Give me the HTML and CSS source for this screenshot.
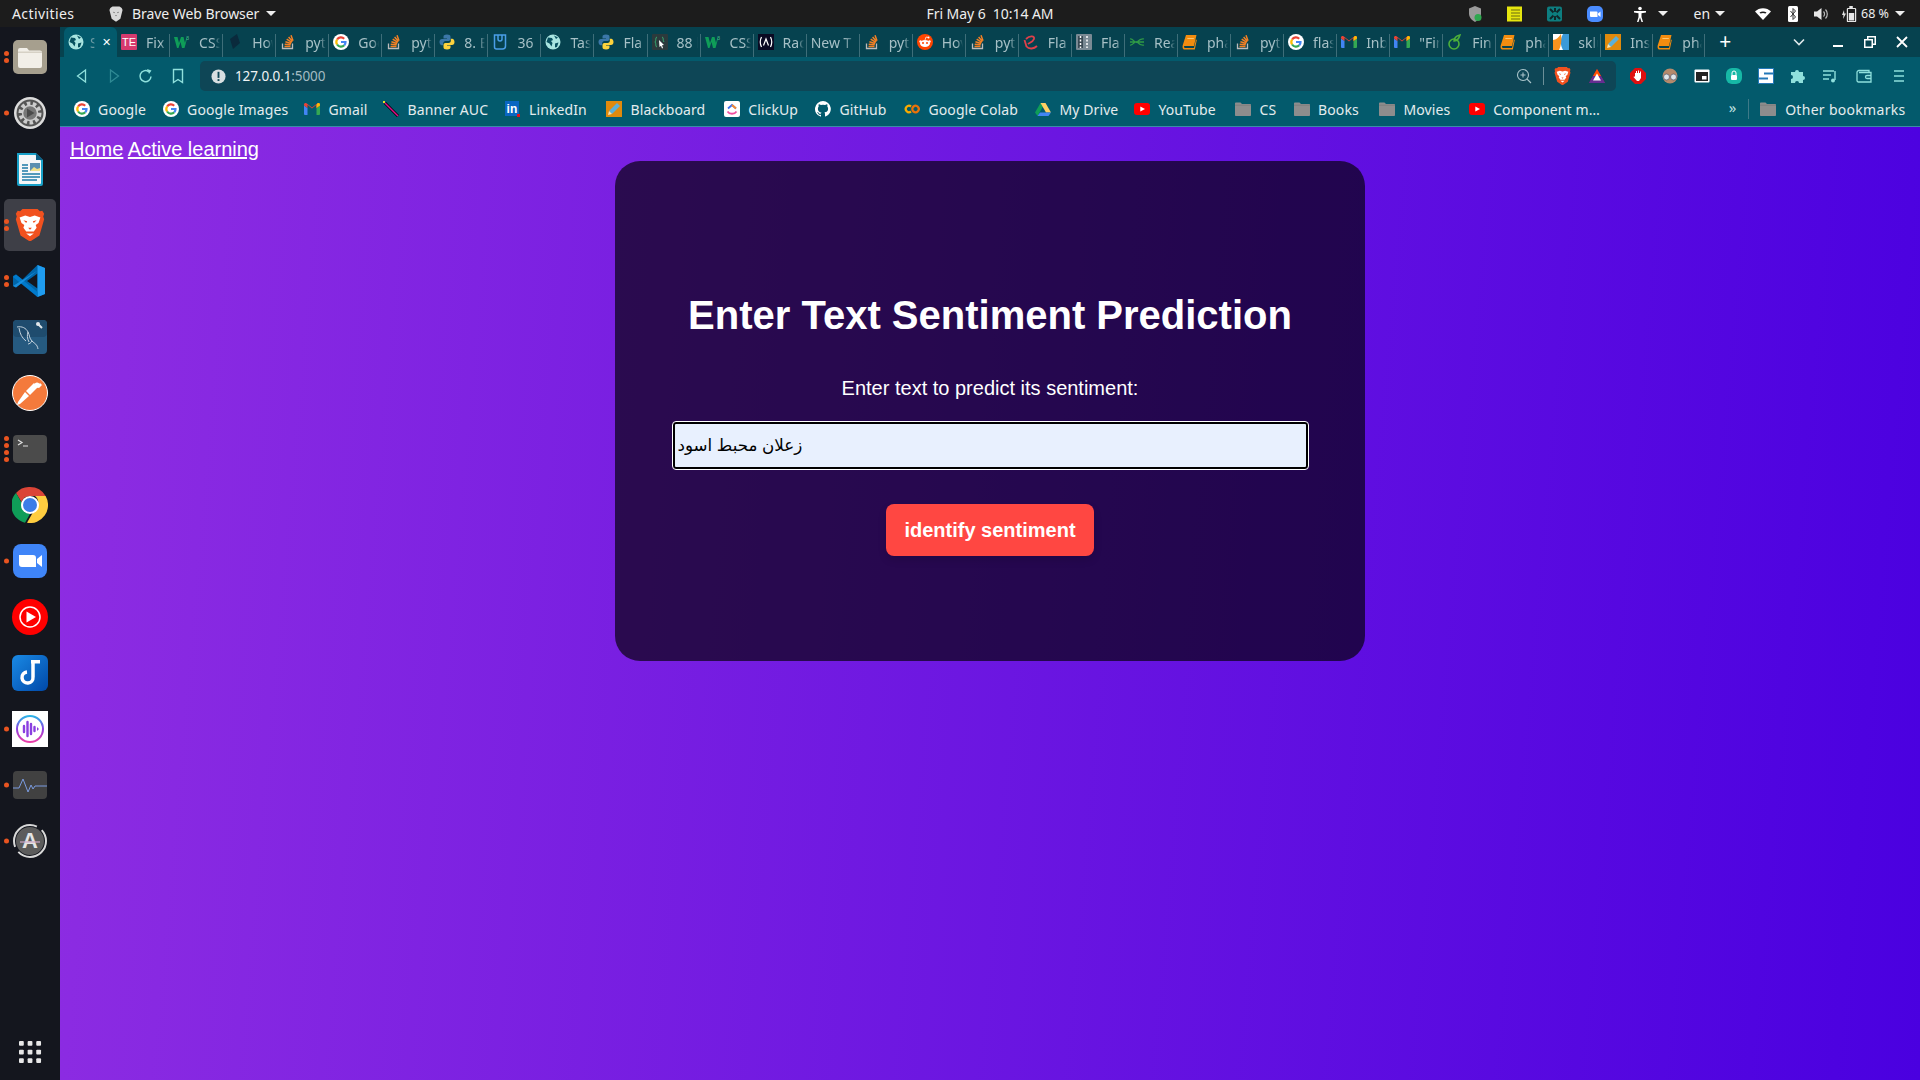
FILE: index.html
```html
<!DOCTYPE html>
<html lang="en">
<head>
<meta charset="utf-8">
<title>Enter Text Sentiment Prediction</title>
<link rel="stylesheet" href="styles.css">
</head>
<body>
<svg class="defs" aria-hidden="true">
  <symbol id="lion" viewBox="0 0 32 36"><path fill="#f1511f" d="M8 1h16l2.500 2.500L29 3l2 3-1 3 1 3-5 17-9 6-2 0-9-6L1 12l1-3-1-3 2-3 2.500.5z"/><path fill="#fff" d="M5 10l6-2 5 1.500L21 8l6 2-2 6-3 2 1 3-3 4h-8l-3-4 1-3-3-2z"/><path fill="#f1511f" d="M9 13l4 1-1 2zM23 13l-4 1 1 2zM14 21h4l-2 2z"/><path fill="#fff" d="M12 27h8l-4 3z"/></symbol>
  <symbol id="lionGray" viewBox="0 0 32 36"><path fill="#d9d9d9" d="M8 1h16l5 3 2 5-5 20-9 6h-2l-9-6L1 9l2-5z"/><path fill="#444" d="M9 13l4 1-1 2zM23 13l-4 1 1 2zM14 21h4l-2 2z"/></symbol>
  <symbol id="globe" viewBox="0 0 16 16"><circle cx="8" cy="8" r="7.500" fill="#a8e4e0"/><path fill="#07505f" d="M3 3.500l4 .500 1 2-2 1 1.500 2-1 3.500-2-3-3-1.500zM10 9.500l3.500-1L12 13l-2 .5zM9 1.500l4 2-2 1.500z"/></symbol>
  <symbol id="g" viewBox="0 0 16 16"><circle cx="8" cy="8" r="8" fill="#fff"/><g fill="none" stroke-width="2.200"><path stroke="#ea4335" d="M4.100 5.500A4.600 4.600 0 0 1 11.200 4.700"/><path stroke="#fbbc05" d="M4.100 10.500A4.600 4.600 0 0 1 4.100 5.500"/><path stroke="#34a853" d="M11.300 11.300A4.600 4.600 0 0 1 4.100 10.500"/><path stroke="#4285f4" d="M8 8h4.500A4.600 4.600 0 0 1 11.300 11.300"/></g></symbol>
  <symbol id="gmail" viewBox="0 0 16 16"><path fill="#4285f4" d="M0 4.500l3.500 2.500V14H1a1 1 0 0 1-1-1z"/><path fill="#34a853" d="M16 4.500L12.500 7v7H15a1 1 0 0 0 1-1z"/><path fill="#ea4335" d="M0 3.500C0 2 1.500 1.500 2.500 2.300L8 6.500l5.500-4.200C14.500 1.500 16 2 16 3.500v1L12.500 7V3.800L8 7.500 3.500 3.800V7L0 4.500z"/><path fill="#fbbc05" d="M12.500 4v3L16 4.500v-1C16 2 14.500 1.500 13.500 2.300z"/></symbol>
  <symbol id="so" viewBox="0 0 16 16"><path fill="none" stroke="#bcbbbb" stroke-width="1.300" d="M2.500 9.500v5h10v-5"/><path fill="none" stroke="#f48024" stroke-width="1.500" d="M4.500 12.500h6M4.700 10.200l6 .6M5.400 7.700l5.800 1.800M6.700 5.200l5.100 3.100M8.600 3l3.900 4.500M11 1.300l2 5.500"/></symbol>
  <symbol id="python" viewBox="0 0 16 16"><path fill="#3b77a8" d="M8 .5c-3 0-3.500 1-3.500 2.200V4.500H8V5H3C1.500 5 .5 6.200.5 8s1 3.200 2.300 3.200H4.200V9.300c0-1.300 1-2.300 2.300-2.300h3.200c1 0 1.800-.8 1.800-1.900V2.700C11.500 1.300 10.300.5 8 .5z"/><path fill="#fdd23c" d="M8 15.500c3 0 3.500-1 3.500-2.200v-1.800H8V11h5c1.500 0 2.500-1.200 2.500-3s-1-3.200-2.300-3.200h-1.400v1.900c0 1.300-1 2.300-2.300 2.300H6.300c-1 0-1.800.8-1.800 1.900v2.400c0 1.400 1.200 2.200 3.500 2.200z"/></symbol>
  <symbol id="book" viewBox="0 0 16 16"><path fill="#f28c0f" d="M4 1h10.500l-2.500 11H2.500C1.500 12 2 14 3 14h9l2-8.500.8.500L12.800 15.500H2.500C.5 15.500 .3 13 .8 11z"/><path fill="#ffc56a" d="M5.500 4h6.500l-.3 1H5.200z"/></symbol>
  <symbol id="w3" viewBox="0 0 16 16"><path fill="#0f9d58" d="M0 3h3.500l1.500 6 2-6h2.500l1.500 6 1.500-6h1L10.500 14H8L6.500 8 4.500 14H3z"/><text x="12" y="5.500" font-size="5.500" fill="#4db38a" font-family="Liberation Sans">3</text></symbol>
  <symbol id="folder" viewBox="0 0 16 16"><path fill="#8d8d8d" d="M0 2.500C0 2 .4 1.500 1 1.500h4.500l1.500 1.500h8c.6 0 1 .4 1 1v10c0 .6-.4 1-1 1H1c-.6 0-1-.4-1-1z"/><path fill="#777" d="M0 4.500h16V3.800H0z"/></symbol>
  <symbol id="yt" viewBox="0 0 16 16"><rect y="2" width="16" height="12" rx="3" fill="#f00"/><path fill="#fff" d="M6.300 5.500L11 8l-4.700 2.500z"/></symbol>
  <symbol id="pencil" viewBox="0 0 16 16"><rect width="16" height="16" fill="#e08a0c"/><path fill="#5bb0d8" d="M11 2l3 3-8 8-3-3z"/><path fill="#f7e4b5" d="M3 10l3 3-4 1z"/></symbol>
  <symbol id="reddit" viewBox="0 0 16 16"><circle cx="8" cy="8" r="8" fill="#ff4500"/><ellipse cx="8" cy="9.500" rx="5" ry="3.500" fill="#fff"/><circle cx="3.500" cy="7.500" r="1.200" fill="#fff"/><circle cx="12.500" cy="7.500" r="1.200" fill="#fff"/><circle cx="11.500" cy="3.500" r="1" fill="#fff"/><path stroke="#fff" fill="none" stroke-width=".7" d="M8 6l1-3 2.500.5"/><circle cx="6" cy="9" r="1" fill="#ff4500"/><circle cx="10" cy="9" r="1" fill="#ff4500"/></symbol>
</svg>

<div class="screen">
  <header class="topbar">
    <div class="top-left">
      <span class="activities">Activities</span>
      <svg class="top-lion"><use href="#lionGray"/></svg>
      <span>Brave Web Browser</span>
      <span class="caret"></span>
    </div>
    <div class="clock">Fri May 6&nbsp; 10:14 AM</div>
    <div class="tray">
      <svg class="tray-ic" viewBox="0 0 16 16"><path fill="#9a9a9a" d="M8 0l6 2.500v5C14 11.500 11 14.500 8 16c-3-1.500-6-4.500-6-8.500v-5z"/><circle cx="11" cy="11.500" r="3.500" fill="#2ea84f"/></svg>
      <svg class="tray-ic" viewBox="0 0 16 16"><rect width="15" height="15" y=".5" fill="#e6e60f"/><path stroke="#6a6a10" stroke-width="1.200" d="M4 4h9M4 7h9M4 10h9M4 13h9"/></svg>
      <svg class="tray-ic" viewBox="0 0 16 16"><rect width="15" height="15" y=".5" rx="2" fill="#0d7e80"/><path stroke="#10262a" stroke-width="2" d="M3 3l10 10M13 3L3 13M8 2v12"/><circle cx="8" cy="8" r="2.200" fill="#0d7e80"/></svg>
      <svg class="tray-ic" viewBox="0 0 16 16"><rect width="16" height="16" rx="5" fill="#4a8cff"/><path fill="#fff" d="M3 5.500h6.500a1 1 0 0 1 1 1V11H4a1 1 0 0 1-1-1zM11 7.500l2.500-2v5.500L11 9z"/></svg>
      <svg class="tray-ic" viewBox="0 0 16 16"><circle cx="8" cy="2.500" r="1.800" fill="#fff"/><path fill="#fff" d="M2 5h12v1.500l-4.500.7V11l1.500 5H9.500L8 11.500 6.500 16H5l1.500-5V7.200L2 6.500z"/></svg>
      <span class="caret"></span>
      <span class="tray-en">en</span>
      <span class="caret"></span>
      <svg class="tray-ic" viewBox="0 0 16 16"><path fill="#fff" d="M0 5.500C4 1 12 1 16 5.500L8 14z"/><path fill="#1c1c1c" d="M4.500 6.500c2-1.300 5-1.300 7 0l-1 1c-1.500-.8-3.500-.8-5 0z"/></svg>
      <svg class="tray-ic" viewBox="0 0 16 16"><rect x="3" width="10" height="16" rx="1.500" fill="#fff"/><path fill="none" stroke="#333" stroke-width="1" d="M5.500 5l5 6L8 13.500v-11L10.500 5l-5 6"/></svg>
      <svg class="tray-ic" viewBox="0 0 16 16"><path fill="#e6e6e6" d="M1 5.500h3L8.500 2v12L4 10.500H1z"/><path fill="none" stroke="#bbb" stroke-width="1.200" d="M10.500 5.500a3.500 3.500 0 0 1 0 5M12.500 3.500a6.500 6.500 0 0 1 0 9"/></svg>
      <svg class="tray-ic" viewBox="0 0 16 16"><path fill="none" stroke="#e6e6e6" stroke-width="1.200" d="M7 2.500h7a.6.6 0 0 1 .6.6v12a.6.6 0 0 1-.6.6H7a.6.6 0 0 1-.6-.6v-12a.6.6 0 0 1 .6-.6z"/><rect x="8.300" y="0" width="3.500" height="2" fill="#e6e6e6"/><rect x="7.800" y="7" width="5.400" height="7.500" fill="#e6e6e6"/><path fill="#e6e6e6" d="M3 4L1 9h1.500L2 13l3-5.500H3.300z"/></svg>
      <span class="tray-bat">68 %</span>
      <span class="caret"></span>
    </div>
  </header>

  <div class="desktop">
    <nav class="dock">
      <div class="dock-item"><div class="dots"><i></i><i></i></div>
        <svg class="dock-ic" viewBox="0 0 34 34"><rect width="34" height="34" rx="5" fill="#a69f8e"/><path fill="#f2efe8" d="M5 10a2 2 0 0 1 2-2h7l2 2.500h11a2 2 0 0 1 2 2V26a2 2 0 0 1-2 2H7a2 2 0 0 1-2-2z"/><path fill="#d6d1c5" d="M5 11.500h24v1.500H5z"/></svg></div>
      <div class="dock-item"><div class="dots"><i></i></div>
        <svg class="dock-ic" viewBox="0 0 34 34"><circle cx="17" cy="17" r="16" fill="#dcdcdc"/><circle cx="17" cy="17" r="13.500" fill="#555"/><circle cx="17" cy="17" r="9" fill="none" stroke="#ccc" stroke-width="5" stroke-dasharray="3.300 2.300"/><circle cx="17" cy="17" r="7.500" fill="#777" stroke="#ccc" stroke-width="1.500"/><path fill="#4a4a4a" d="M14 12.500l7.500 4.500-7.500 4.500z"/></svg></div>
      <div class="dock-item">
        <svg class="dock-ic" viewBox="0 0 34 34"><path fill="#18a0c8" d="M4 1h19l7 7v24a2 2 0 0 1-2 2H6a2 2 0 0 1-2-2z"/><path fill="#f5f7f8" d="M6 3h16.500L28 8.500V31a1 1 0 0 1-1 1H7a1 1 0 0 1-1-1z"/><path fill="#0e5f84" d="M23 1l7 7h-7z"/><rect x="17" y="11" width="10" height="8" fill="#5b8fb0"/><path fill="#efe08a" d="M17 19l4-4 3 2 3-1v3z"/><path stroke="#1c7ba6" stroke-width="1.500" d="M9 13h6M9 16h6M9 19h6M9 22h18M9 25h18M9 28h15"/></svg></div>
      <div class="dock-item dock-active"><div class="dots"><i></i><i></i></div>
        <svg class="dock-ic" viewBox="0 0 32 36"><use href="#lion"/></svg></div>
      <div class="dock-item"><div class="dots"><i></i><i></i></div>
        <svg class="dock-ic" viewBox="0 0 34 34"><path fill="#0065a9" d="M24.500 1L9.500 15.500 3 10.500 0 12v10l3 1.500 6.500-5L24.500 33 32 30V4zM24.500 9.500V24.500L14 17z"/><path fill="#1f9cf0" d="M24.500 1L32 4v26l-7.500 3z"/><path fill="#007acc" d="M3 10.500L24.500 28v5L0 13z"/><path fill="#1f9cf0" d="M24.500 1v5.500L0 22l3 1.500L24.500 6.500z" opacity=".7"/></svg></div>
      <div class="dock-item">
        <svg class="dock-ic" viewBox="0 0 34 34"><rect width="34" height="34" rx="4" fill="#265a80"/><rect width="34" height="17" rx="4" fill="#1f4c6e"/><path fill="none" stroke="#d5e0e8" stroke-width=".9" d="M4 7c5-1 9 1 11 5s1 6 4 9 5 3 6 8M15 12c-1 3-1 6 1 10M6 8c1 6 3 10 7 13M19 21c-1 2-3 3-4 3"/><path stroke="#dfe6ea" stroke-width="2" d="M25 4l4 4"/><circle cx="25" cy="4" r="2" fill="#dfe6ea"/></svg></div>
      <div class="dock-item">
        <svg class="dock-ic dock-big" viewBox="0 0 36 36"><circle cx="18" cy="18" r="17.500" fill="#f47a3c" stroke="#fff" stroke-width="1"/><path fill="#fff" d="M28 8l2 2-3 3-3-1zM26 12l-8 8-4-4 8-8zM13 17l4 4-9 8-3 1 1-3z"/><circle cx="25" cy="10" r="2.500" fill="#fff"/></svg></div>
      <div class="dock-item"><div class="dots"><i></i><i></i><i></i><i></i></div>
        <svg class="dock-ic dock-term" viewBox="0 0 34 28"><rect width="34" height="28" rx="4" fill="#4b4b4b"/><path fill="none" stroke="#e0e0e0" stroke-width="1.200" d="M5 5l4 2.500L5 10M10 11h5"/></svg></div>
      <div class="dock-item">
        <svg class="dock-ic dock-big" viewBox="0 0 36 36"><path fill="#db4437" d="M18 0a18 18 0 0 1 15.600 9H18a9 9 0 0 0-8.500 6L4 6a18 18 0 0 1 14-6z"/><path fill="#0f9d58" d="M4 6l7.800 13.500A7 7 0 0 0 18 27l-5 8.700A18 18 0 0 1 4 6z"/><path fill="#ffcd40" d="M33.600 9A18 18 0 0 1 15 35.800L24 20a7 7 0 0 0-1-11z"/><circle cx="18" cy="18" r="9" fill="#fff"/><circle cx="18" cy="18" r="7" fill="#3b7de8"/></svg></div>
      <div class="dock-item"><div class="dots"><i></i></div>
        <svg class="dock-ic" viewBox="0 0 34 34"><rect width="34" height="34" rx="8" fill="#3f85f8"/><path fill="#fff" d="M6 11h14a3 3 0 0 1 3 3v9H9a3 3 0 0 1-3-3zM24 15l5-4v12l-5-4z"/></svg></div>
      <div class="dock-item">
        <svg class="dock-ic dock-big" viewBox="0 0 36 36"><circle cx="18" cy="18" r="18" fill="#f00"/><circle cx="18" cy="18" r="10" fill="none" stroke="#fff" stroke-width="1.500"/><path fill="#fff" d="M14.500 12.500L24 18l-9.500 5.500z"/></svg></div>
      <div class="dock-item">
        <svg class="dock-ic dock-big" viewBox="0 0 36 36"><defs><linearGradient id="jop" x1="0" y1="0" x2="1" y2="1"><stop offset="0" stop-color="#1a8ae5"/><stop offset="1" stop-color="#0048a8"/></linearGradient></defs><rect width="36" height="36" rx="6" fill="url(#jop)"/><path fill="none" stroke="#fff" stroke-width="3.500" d="M21 7v15a5.500 5.500 0 1 1-6-5"/><path fill="#fff" d="M19 5h9v3.500h-9z"/></svg></div>
      <div class="dock-item"><div class="dots"><i></i></div>
        <svg class="dock-ic dock-big" viewBox="0 0 36 36"><defs><linearGradient id="ang" x1="0" y1="0" x2="0" y2="1"><stop offset="0" stop-color="#2bb5e8"/><stop offset=".5" stop-color="#8a3fe0"/><stop offset="1" stop-color="#ea3fa8"/></linearGradient></defs><rect width="36" height="36" fill="#fff"/><circle cx="18" cy="18" r="13" fill="none" stroke="url(#ang)" stroke-width="2"/><path stroke="#8a3fe0" stroke-width="2.400" stroke-linecap="round" d="M12 15v6M15.500 11v14M19 13v10M22.500 16v4"/><path fill="#8a3fe0" d="M25 16l2 2-2 2z"/></svg></div>
      <div class="dock-item"><div class="dots"><i></i></div>
        <svg class="dock-ic dock-term" viewBox="0 0 34 28"><rect width="34" height="28" rx="4" fill="#414141"/><path fill="none" stroke="#7a9be0" stroke-width="1" d="M0 17h6l4-9 5 13 3-7 2 4 2-3h12"/></svg></div>
      <div class="dock-item"><div class="dots"><i></i></div>
        <svg class="dock-ic" viewBox="0 0 34 34"><circle cx="17" cy="17" r="16" fill="none" stroke="#d8d8d8" stroke-width="2" stroke-dasharray="38 6"/><circle cx="17" cy="17" r="14" fill="#5c5c5c"/><text class="updater-a" x="17" y="24" text-anchor="middle">A</text><path stroke="#cfa8c8" stroke-width="1.200" d="M7 18h20"/></svg></div>
      <div class="dock-item dock-apps">
        <svg class="apps-ic" viewBox="0 0 24 24"><g fill="#e8e8e8"><rect x="0" y="0" width="5" height="5" rx="1"/><rect x="9" y="0" width="5" height="5" rx="1"/><rect x="18" y="0" width="5" height="5" rx="1"/><rect x="0" y="9" width="5" height="5" rx="1"/><rect x="9" y="9" width="5" height="5" rx="1"/><rect x="18" y="9" width="5" height="5" rx="1"/><rect x="0" y="18" width="5" height="5" rx="1"/><rect x="9" y="18" width="5" height="5" rx="1"/><rect x="18" y="18" width="5" height="5" rx="1"/></g></svg></div>
    </nav>

    <div class="browser">
      <div class="tabstrip">
        <div class="tab tab-active"><svg class="fav"><use href="#globe"/></svg><span class="tab-label">S</span><span class="tab-x">✕</span></div>
        <div class="tab"><svg class="fav" viewBox="0 0 16 16"><rect width="16" height="16" rx="1" fill="#d63a6e"/><text class="fav-te" x="8" y="12" text-anchor="middle">TE</text></svg><span class="tab-label">Fix</span></div>
        <div class="tab"><svg class="fav"><use href="#w3"/></svg><span class="tab-label">CSS</span></div>
        <div class="tab"><svg class="fav" viewBox="0 0 16 16"><path fill="#0a2a3c" d="M3 5l7-5 3 9-7 6z"/></svg><span class="tab-label">How</span></div>
        <div class="tab"><svg class="fav"><use href="#so"/></svg><span class="tab-label">pyt</span></div>
        <div class="tab"><svg class="fav"><use href="#g"/></svg><span class="tab-label">Goo</span></div>
        <div class="tab"><svg class="fav"><use href="#so"/></svg><span class="tab-label">pyt</span></div>
        <div class="tab"><svg class="fav"><use href="#python"/></svg><span class="tab-label">8. E</span></div>
        <div class="tab"><svg class="fav" viewBox="0 0 16 16"><path fill="none" stroke="#4a9ee8" stroke-width="1.500" d="M2.500 1h11v11a3 3 0 0 1-3 3h-6a2 2 0 0 1-2-2z"/><path fill="none" stroke="#4a9ee8" stroke-width="1.500" d="M6 1v4a2 2 0 0 0 4 0V1"/></svg><span class="tab-label">36 l</span></div>
        <div class="tab"><svg class="fav"><use href="#globe"/></svg><span class="tab-label">Tas</span></div>
        <div class="tab"><svg class="fav"><use href="#python"/></svg><span class="tab-label">Fla</span></div>
        <div class="tab"><svg class="fav" viewBox="0 0 16 16"><rect width="16" height="16" rx="1" fill="#2c3a3c"/><path fill="none" stroke="#35a870" d="M5 3C3 3 4.500 7 3 8c1.500 1 0 5 2 5M10 3c2 0 .5 4 2 5"/><path fill="#fff" d="M7 6l5 5-2 .3 1 2.700-1 .4-1-2.700L7.500 13z"/></svg><span class="tab-label">88 l</span></div>
        <div class="tab"><svg class="fav"><use href="#w3"/></svg><span class="tab-label">CSS</span></div>
        <div class="tab"><svg class="fav" viewBox="0 0 16 16"><rect width="16" height="16" fill="#0a0a23"/><path fill="none" stroke="#fff" stroke-width="1.200" d="M3.500 3C2 6 2 10 3.500 13M12.500 3c1.500 3 1.500 7 0 10M5.500 11.500L8 5l2.500 6.500"/></svg><span class="tab-label">Rac</span></div>
        <div class="tab tab-nofav"><span class="tab-label">New T</span></div>
        <div class="tab"><svg class="fav"><use href="#so"/></svg><span class="tab-label">pyt</span></div>
        <div class="tab"><svg class="fav"><use href="#reddit"/></svg><span class="tab-label">Hov</span></div>
        <div class="tab"><svg class="fav"><use href="#so"/></svg><span class="tab-label">pyt</span></div>
        <div class="tab"><svg class="fav" viewBox="0 0 16 16"><path fill="none" stroke="#e0404a" stroke-width="1.800" d="M1.500 6l2 6.500C6 15.500 11 15 14 12M3 5c4-4 9-3 8 0s-5 4-6 5"/></svg><span class="tab-label">Fla</span></div>
        <div class="tab"><svg class="fav" viewBox="0 0 16 16"><rect width="16" height="16" rx="1" fill="#7a8a94"/><rect x="2" y="2" width="5" height="12" fill="#3a4a54"/><path stroke="#fff" stroke-width="1.500" stroke-dasharray="2 1.500" d="M11 2v12M4.500 2v12"/></svg><span class="tab-label">Fla</span></div>
        <div class="tab"><svg class="fav" viewBox="0 0 16 16"><path fill="none" stroke="#2f9a46" stroke-width="1.300" d="M1 5c3-1 5 5 7 3s4-4 7-3M1 11c3 1 5-5 7-3s4 4 7 3M1 8h14"/></svg><span class="tab-label">Rea</span></div>
        <div class="tab"><svg class="fav"><use href="#book"/></svg><span class="tab-label">pha</span></div>
        <div class="tab"><svg class="fav"><use href="#so"/></svg><span class="tab-label">pyt</span></div>
        <div class="tab"><svg class="fav"><use href="#g"/></svg><span class="tab-label">flas</span></div>
        <div class="tab"><svg class="fav"><use href="#gmail"/></svg><span class="tab-label">Inb</span></div>
        <div class="tab"><svg class="fav"><use href="#gmail"/></svg><span class="tab-label">"Fin</span></div>
        <div class="tab"><svg class="fav" viewBox="0 0 16 16"><circle cx="7" cy="10" r="5" fill="none" stroke="#4caf3a" stroke-width="1.600"/><path fill="none" stroke="#4caf3a" stroke-width="1.500" d="M7 7c0-3 2-5 6-6-1 3-2 6-6 6z"/></svg><span class="tab-label">Fin</span></div>
        <div class="tab"><svg class="fav"><use href="#book"/></svg><span class="tab-label">pha</span></div>
        <div class="tab"><svg class="fav" viewBox="0 0 16 16"><rect width="16" height="16" fill="#fff"/><path fill="#3a9ad9" d="M10 0h6v16h-6c-3-5-3-11 0-16z"/><path fill="#f7931e" d="M0 6c3 0 6-3 8-6 1 6 0 12-2 16H0z"/></svg><span class="tab-label">sklu</span></div>
        <div class="tab"><svg class="fav"><use href="#pencil"/></svg><span class="tab-label">Ins</span></div>
        <div class="tab"><svg class="fav"><use href="#book"/></svg><span class="tab-label">pha</span></div>
        <div class="new-tab">+</div>
        <div class="win-ctrls">
          <svg class="win-ic" viewBox="0 0 12 12"><path fill="none" stroke="#dfe8ea" stroke-width="1.600" d="M1 3.500l5 5 5-5"/></svg>
          <svg class="win-ic" viewBox="0 0 12 12"><path stroke="#fff" stroke-width="2" d="M1 10h10"/></svg>
          <svg class="win-ic" viewBox="0 0 12 12"><path fill="#fff" d="M3 0h9v9H9v3H0V3h3zM4.500 1.500V3H9v4.500h1.500v-6zM1.500 4.500v6h6v-6z"/></svg>
          <svg class="win-ic" viewBox="0 0 12 12"><path stroke="#fff" stroke-width="1.800" d="M1 1l10 10M11 1L1 11"/></svg>
        </div>
      </div>

      <div class="toolbar">
        <div class="nav-btns">
          <svg class="tb-ic" viewBox="0 0 16 16"><path fill="none" stroke="#8fe0dc" stroke-width="1.300" d="M11.500 2v12L3.500 8z"/></svg>
          <svg class="tb-ic" viewBox="0 0 16 16"><path fill="none" stroke="#2f8a94" stroke-width="1.300" d="M4.500 2v12l8-6z"/></svg>
          <svg class="tb-ic" viewBox="0 0 16 16"><path fill="none" stroke="#8fe0dc" stroke-width="1.500" d="M13 8.500A5.500 5.500 0 1 1 10.500 3.500"/><path fill="#8fe0dc" d="M9 1l4.500 1.500L11 6z"/></svg>
          <svg class="tb-ic" viewBox="0 0 16 16"><path fill="none" stroke="#8fe0dc" stroke-width="1.400" d="M3.500 1.500h9v13L8 11.500l-4.500 3z"/></svg>
        </div>
        <div class="urlbar">
          <svg class="url-info" viewBox="0 0 16 16"><circle cx="8" cy="8" r="7.500" fill="#d8dfe1"/><rect x="7" y="3" width="2" height="6.500" fill="#0e4656"/><rect x="7" y="10.800" width="2" height="2" fill="#0e4656"/></svg>
          <span class="url-text">127.0.0.1<span class="url-dim">:5000</span></span>
          <div class="url-right">
            <svg class="tb-ic" viewBox="0 0 16 16"><circle cx="7" cy="7" r="5.500" fill="none" stroke="#a9c4ca" stroke-width="1.100"/><path stroke="#a9c4ca" stroke-width="1.100" d="M11 11l4 4M4.500 7h5M7 4.500v5"/></svg>
            <span class="url-sep"></span>
            <svg class="url-lion" viewBox="0 0 32 36"><use href="#lion"/></svg>
            <svg class="tb-ic url-bat" viewBox="0 0 16 16"><path fill="#9e1f63" d="M8 1l8 14H0z"/><path fill="#ff5000" d="M8 1l4 7H4z"/><path fill="#662d91" d="M4 8h8l4 7H0z"/><path fill="#fff" d="M8 5.500L12 12.500H4z"/></svg>
          </div>
        </div>
        <div class="ext-btns">
          <svg class="tb-ic" viewBox="0 0 16 16"><path fill="#e00f0f" d="M5 0h6l5 5v6l-5 5H5l-5-5V5z"/><path fill="#fff" d="M5 5h1V3h1v2h1V2.500h1V5h1V3.500h1V10l-2 3H7L3.500 9l.8-.8L5 9z"/></svg>
          <svg class="tb-ic" viewBox="0 0 16 16"><circle cx="8" cy="8" r="7.500" fill="#b58a6c"/><circle cx="4.500" cy="9" r="3" fill="#dfe6ea" stroke="#556" stroke-width=".7"/><circle cx="11.500" cy="9" r="3" fill="#dfe6ea" stroke="#556" stroke-width=".7"/></svg>
          <svg class="tb-ic" viewBox="0 0 16 16"><rect x=".5" y="1.500" width="15" height="13" rx="1" fill="#fff"/><rect x="2" y="4" width="12" height="9" fill="#222"/><rect x="8" y="8" width="4.500" height="3.500" fill="#fff"/></svg>
          <svg class="tb-ic" viewBox="0 0 16 16"><rect width="16" height="16" rx="6" fill="#17b8a6"/><path fill="none" stroke="#fff" d="M6 7V5a2 2 0 0 1 4 0v2"/><rect x="5" y="7" width="6" height="5" rx="1" fill="#fff"/></svg>
          <svg class="tb-ic" viewBox="0 0 16 16"><rect width="16" height="16" fill="#2478b8"/><path fill="#fff" d="M1 1h14v3.500H6v2h9V15H1v-3.500h9v-2H1z"/></svg>
          <svg class="tb-ic" viewBox="0 0 16 16"><path fill="#8fe0dc" d="M1 4h4a2 2 0 1 1 4 0h4v4a2 2 0 1 1 0 4v3H9a2 2 0 1 0-4 0H1v-4a2 2 0 1 0 0-4z"/></svg>
          <svg class="tb-ic" viewBox="0 0 16 16"><path stroke="#8fe0dc" stroke-width="1.400" fill="none" d="M1 3h11M1 7h8M1 11h6M13 3v9"/><circle cx="11" cy="12.500" r="2" fill="#8fe0dc"/></svg>
          <svg class="tb-ic ext-wallet" viewBox="0 0 16 16"><path fill="none" stroke="#8fe0dc" stroke-width="1.300" d="M1 4.500a2 2 0 0 1 2-2h10v2M1 4.500v8a1.500 1.500 0 0 0 1.500 1.500H15V4.500H3M15 7.500h-4a1.500 1.500 0 0 0 0 3h4"/></svg>
          <svg class="tb-ic ext-menu" viewBox="0 0 16 16"><path stroke="#8fe0dc" stroke-width="1.500" d="M3 3h10M3 8h10M3 13h10"/></svg>
        </div>
      </div>

      <div class="bookmarks">
        <div class="bm"><svg class="fav"><use href="#g"/></svg><span>Google</span></div>
        <div class="bm"><svg class="fav"><use href="#g"/></svg><span>Google Images</span></div>
        <div class="bm"><svg class="fav"><use href="#gmail"/></svg><span>Gmail</span></div>
        <div class="bm"><svg class="fav" viewBox="0 0 16 16"><path stroke="#000" stroke-width="3" d="M2 2l13 13"/><path stroke="#e0108a" stroke-width="1.500" d="M2 2l13 13"/><rect width="2" height="2" fill="#e8e020"/></svg><span>Banner AUC</span></div>
        <div class="bm"><svg class="fav" viewBox="0 0 16 16"><rect width="14" height="15" fill="#0a66c2"/><text class="fav-in" x="7" y="12" text-anchor="middle">in</text><rect x="12" y="13" width="3" height="3" fill="#e0101a"/></svg><span>LinkedIn</span></div>
        <div class="bm"><svg class="fav"><use href="#pencil"/></svg><span>Blackboard</span></div>
        <div class="bm"><svg class="fav" viewBox="0 0 16 16"><rect width="16" height="16" rx="2" fill="#fff"/><path fill="none" stroke="#f24fa0" stroke-width="1.800" d="M3.500 10.500c2 3 7 3 9 0"/><path fill="none" stroke="#3a6ff0" stroke-width="1.800" d="M4 7.500L8 4l4 3.500"/><path stroke="#fa8a2a" stroke-width="1.800" d="M8 4l4 3.500"/></svg><span>ClickUp</span></div>
        <div class="bm"><svg class="fav" viewBox="0 0 16 16"><path fill="#fff" d="M8 0a8 8 0 0 0-2.500 15.600c.4.100.5-.2.500-.4v-1.400c-2.200.5-2.700-1-2.700-1-.4-.9-.9-1.200-.9-1.200-.7-.5.100-.5.100-.5.800.100 1.200.8 1.200.8.700 1.200 1.900.9 2.300.7.100-.5.300-.9.500-1.100-1.800-.2-3.600-.9-3.600-4 0-.9.300-1.600.8-2.100-.1-.2-.4-1 .1-2.100 0 0 .7-.2 2.200.8a7.600 7.600 0 0 1 4 0c1.500-1 2.200-.8 2.200-.8.400 1.100.2 1.900.1 2.100.5.600.8 1.300.8 2.100 0 3.100-1.900 3.700-3.700 3.900.3.300.6.800.6 1.500v2.200c0 .2.100.5.600.4A8 8 0 0 0 8 0z"/></svg><span>GitHub</span></div>
        <div class="bm"><svg class="fav" viewBox="0 0 16 16"><g fill="none" stroke-width="2.300"><path stroke="#f9ab00" d="M7 5.500a3.200 3.200 0 1 0 0 5"/><path stroke="#e8710a" d="M9.500 5.500a3.200 3.200 0 1 1 0 5 3.200 3.200 0 0 1 0-5z"/></g></svg><span>Google Colab</span></div>
        <div class="bm"><svg class="fav" viewBox="0 0 16 16"><path fill="#0f9d58" d="M5.500 2L0 11.500 2.500 15 8 5.500z"/><path fill="#ffcf63" d="M5.500 2h5L16 11.500h-5z"/><path fill="#4285f4" d="M2.500 15h11L16 11.500H5z"/></svg><span>My Drive</span></div>
        <div class="bm"><svg class="fav"><use href="#yt"/></svg><span>YouTube</span></div>
        <div class="bm"><svg class="fav"><use href="#folder"/></svg><span>CS</span></div>
        <div class="bm"><svg class="fav"><use href="#folder"/></svg><span>Books</span></div>
        <div class="bm"><svg class="fav"><use href="#folder"/></svg><span>Movies</span></div>
        <div class="bm"><svg class="fav"><use href="#yt"/></svg><span>Component m…</span></div>
        <div class="bm-more">»</div>
        <div class="bm bm-other"><svg class="fav"><use href="#folder"/></svg><span>Other bookmarks</span></div>
      </div>

      <main class="page">
        <div class="page-nav"><a href="#">Home</a> <a href="#">Active learning</a></div>
        <section class="card">
          <h1>Enter Text Sentiment Prediction</h1>
          <label class="prompt" for="sentence">Enter text to predict its sentiment:</label>
          <input id="sentence" class="text-input" type="text" value="زعلان محبط اسود">
          <button class="submit" type="button">identify sentiment</button>
        </section>
      </main>
    </div>
  </div>
</div>
</body>
</html>
```
FILE: styles.css
```css
* { box-sizing: border-box; }
html, body { margin: 0; height: 100%; }
body { font-family: "Noto Sans", sans-serif; overflow: hidden; background: #14161e; }
.defs { position: absolute; width: 0; height: 0; }
.screen { display: flex; flex-direction: column; width: 1920px; height: 1080px; }

/* top bar */
.topbar { flex: 0 0 27px; display: flex; align-items: center; background: #1c1c1c; color: #eee; font-size: 14px; letter-spacing: -.05px; }
.top-left { flex: 0 0 925px; display: flex; align-items: center; padding-left: 12px; }
.activities { width: 97px; font-size: 14px; letter-spacing: .4px; white-space: nowrap; }
.top-lion { width: 14px; height: 16px; margin-right: 9px; }
.caret { width: 0; height: 0; border: 5px solid transparent; border-top: 5px solid #eee; border-bottom: 0; margin-left: 7px; }
.clock { flex: 0 0 130px; white-space: nowrap; text-align: center; font-size: 14px; }
.tray { margin-left: auto; display: flex; align-items: center; padding-right: 15px; }
.tray-ic { width: 16px; height: 16px; margin-left: 24px; }
.tray-en { font-size: 14px; margin-left: 26px; }
.tray-bat { font-size: 12.500px; letter-spacing: 0; margin-left: 4px; white-space: nowrap; }
.tray-bat + .caret { margin-left: 6px; }
.tray > .tray-ic:nth-child(5) { margin-left: 29px; }
.tray > .caret:nth-child(6) { margin-left: 10px; }
.tray > .tray-en + .caret { margin-left: 5px; }
.tray > .tray-ic:nth-child(9) { margin-left: 30px; }
.tray > .tray-ic:nth-child(10) { margin-left: 14px; }
.tray > .tray-ic:nth-child(11) { margin-left: 12px; }
.tray > .tray-ic:nth-child(12) { margin-left: 12px; }

/* desktop */
.desktop { flex: 1; display: flex; min-height: 0; }

/* dock */
.dock { flex: 0 0 60px; display: flex; flex-direction: column; padding-top: 2px; background: #14161e; }
.dock-item { position: relative; flex: 0 0 56px; display: flex; align-items: center; justify-content: center; }
.dock-active::before { content: ""; position: absolute; left: 4px; top: 2px; width: 52px; height: 52px; border-radius: 5px; background: #3e3f47; }
.dock-ic { position: relative; width: 34px; height: 34px; }
.dock-big { width: 36px; height: 36px; }
.dock-term { height: 28px; }
.dots { position: absolute; left: 3.500px; top: 50%; transform: translateY(-50%); display: flex; flex-direction: column; gap: 2px; z-index: 1; }
.dots i { width: 5px; height: 5px; border-radius: 50%; background: #e95420; }
.dock-apps { margin-top: auto; margin-bottom: 0; }
.apps-ic { width: 23px; height: 23px; }
.updater-a { font: bold 22px "Liberation Sans", sans-serif; fill: #e4e4e4; }

/* browser */
.browser { flex: 1; display: flex; flex-direction: column; min-width: 0; }
.tabstrip { flex: 0 0 30px; display: flex; padding-left: 4px; background: #06424f; align-items: stretch; position: relative; }
.tab { flex: 0 0 53.060px; display: flex; align-items: center; gap: 9px; padding: 0 3px 0 4px; position: relative; overflow: hidden; }
.tab:nth-child(n+29) { flex-basis: 52px; }
.tab::after { content: ""; position: absolute; right: 0; top: 7px; bottom: 0; width: 1px; background: #3e6e79; }
.tab-active { background: #035a6c; border-radius: 6px 6px 0 0; padding-left: 4px; gap: 6px; }
.tab-active::after { display: none; }
.tab-nofav { padding-left: 4px; }
.fav { flex: 0 0 16px; width: 16px; height: 16px; }
.tab-label { flex: 1; overflow: hidden; white-space: nowrap; font-size: 14px; color: #a6c0c6; -webkit-mask-image: linear-gradient(to right, #000 70%, transparent); mask-image: linear-gradient(to right, #000 70%, transparent); }
.tab-x { position: absolute; right: 6px; top: 7px; color: #fff; font-size: 11px; line-height: 16px; }
.tab-active .tab-label { flex: 0 0 5px; color: #6a9aa4; }
.fav-te { font: 11px "Liberation Sans", sans-serif; fill: #fff; }
.fav-in { font: bold 12px "Liberation Sans", sans-serif; fill: #fff; }
.new-tab { margin-left: 12px; width: 16px; color: #fff; font-size: 21px; line-height: 29px; text-align: center; }
.win-ctrls { margin-left: auto; display: flex; align-items: center; padding-right: 12px; gap: 20px; }
.win-ic { width: 12px; height: 12px; }
.win-ic:first-child { margin-right: 7px; }

.toolbar { flex: 0 0 34px; display: flex; align-items: flex-end; background: #035a6c; }
.nav-btns { flex: 0 0 140px; height: 30px; display: flex; align-items: center; gap: 16px; padding-left: 14px; }
.tb-ic { flex: 0 0 16px; width: 16px; height: 16px; }
.urlbar { flex: 0 0 1415.500px; height: 30px; display: flex; align-items: center; border-radius: 5px; background: #0e4656; padding: 0 10px 0 11px; }
.url-info { width: 15px; height: 15px; margin-right: 9px; }
.url-text { color: #f0f4f5; font-size: 13.5px; letter-spacing: -.1px; }
.url-dim { color: #a4bcc3; }
.url-right { margin-left: auto; display: flex; align-items: center; }
.url-sep { width: 1px; height: 18px; margin: 0 10px 0 11px; background: #6b8f98; }
.url-lion { width: 17px; height: 20px; }
.url-bat { margin-left: 18px; margin-right: 1px; }
.ext-btns { flex: 1; height: 30px; display: flex; align-items: center; gap: 16px; padding-left: 14px; }
.ext-wallet { margin-left: 2px; }
.ext-menu { margin-left: 3px; }

.bookmarks { flex: 0 0 36px; display: grid; grid-template-columns: 89px 141.400px 79px 121.600px 101.400px 117.800px 91.200px 89px 131px 99px 101px 58.600px 85.400px 89.700px 260px 20px 1fr; align-items: center; padding: 1px 0 0 13.600px; background: #035a6c; border-bottom: 1px solid #3a8aa8; color: #e3ecee; font-size: 14px; letter-spacing: .1px; }
.bm { display: flex; align-items: center; gap: 8.500px; white-space: nowrap; min-width: 0; }
.bm-more { color: #bfe0e0; font-size: 15px; line-height: 17px; border-right: 1px solid #3e7a88; height: 20px; }
.bm-other { padding-left: 11px; gap: 9.500px; letter-spacing: .3px; }

/* page */
.page { flex: 1; padding: 11px 10px 0; background: linear-gradient(95deg, #8e2de2, #4a00e0); font-family: "Liberation Sans", Arial, sans-serif; min-height: 0; }
.page-nav { height: 23px; font-size: 20px; line-height: 23px; }
.page-nav a { color: #fff; }
.card { display: flex; flex-direction: column; align-items: center; width: 750px; height: 500px; margin: 0 auto; padding-top: 131px; border-radius: 25px; background: rgba(0, 0, 0, .65); color: #fff; }
.card h1 { margin: 0 0 39px; font-size: 40px; line-height: 46px; font-weight: bold; }
.prompt { font-size: 20px; line-height: 23px; margin-bottom: 22px; }
.text-input { width: 635px; height: 47px; padding: 0 3px; border: 2px solid #000; outline: 1px solid #fff; border-radius: 3px; background: #e8f0fe; color: #000; font: 16.700px "Liberation Sans", "DejaVu Sans", sans-serif; margin-bottom: 35px; }
.submit { width: 208px; height: 52px; border: 0; border-radius: 8px; background: #ff4742; color: #fff; font: bold 20px "Liberation Sans", Arial, sans-serif; box-shadow: 0 4px 8px rgba(0, 0, 0, .12); }
```
